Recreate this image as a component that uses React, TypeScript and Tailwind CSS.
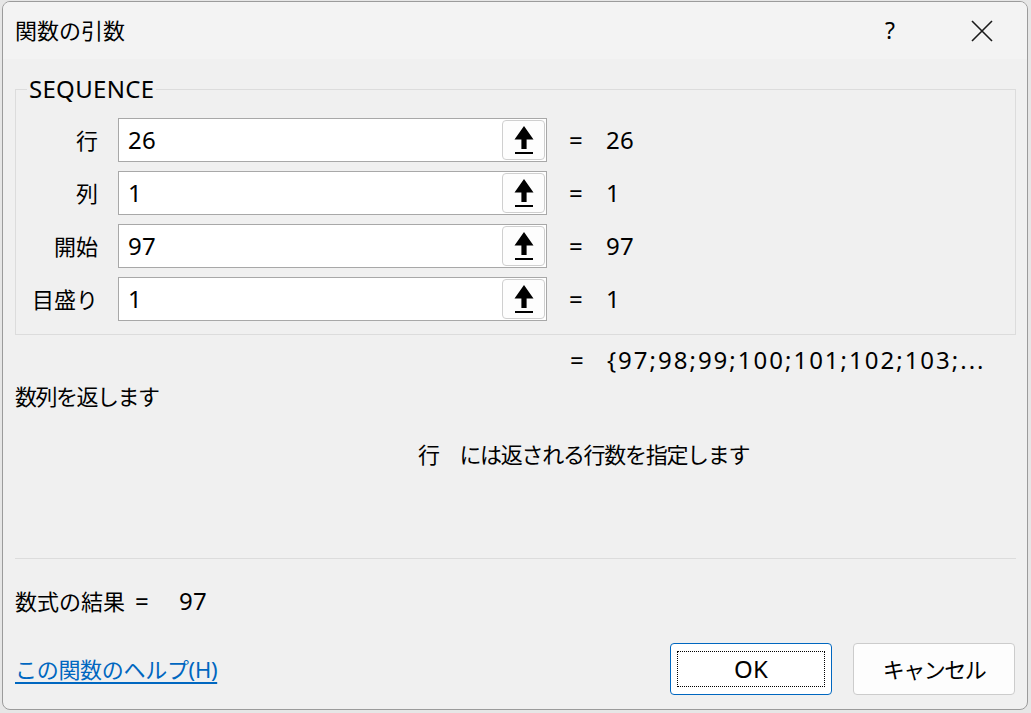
import React from 'react'

const rows = [
  { label: '行', value: '26' },
  { label: '列', value: '1' },
  { label: '開始', value: '97' },
  { label: '目盛り', value: '1' },
]

const font = "font-['Noto_Sans','Noto_Sans_CJK_JP',sans-serif]"
// Latin text in the reference is a bit wider than Noto Sans at 22px
const latin = 'text-[24px] tracking-[0.3px]'

const RefButton = () => (
  <div className="my-[1px] mr-[1px] flex w-[43px] items-center justify-center rounded-[4px] border border-[#cfcfcf] bg-[#fdfdfd]">
    <svg width="20" height="30" viewBox="0 0 20 30" aria-hidden="true">
      <path d="M10 1 L19.5 14.5 H12.6 V24 H7.4 V14.5 H0.5 Z" fill="#000" />
      <rect x="1" y="27" width="18" height="2" fill="#000" />
    </svg>
  </div>
)

const ArgRow = ({ label, value }: { label: string; value: string }) => (
  <div className="flex h-[44px] items-center">
    <div className="w-[84px] pr-[2px] text-right">{label}</div>
    <div className="ml-[18px] flex h-[44px] w-[429px] border border-[#a8a8a8] bg-white">
      <div className={`flex flex-1 items-center pl-[9px] ${latin}`}>{value}</div>
      <RefButton />
    </div>
    <div className={`ml-[22px] w-[37px] ${latin}`}>=</div>
    <div className={latin}>{value}</div>
  </div>
)

export default function App() {
  return (
    <div className={`h-[713px] w-[1031px] overflow-hidden bg-[#e6e6e6] pl-[2px] pt-[1px] text-[22px] text-[#000] ${font}`}>
      <div className="flex h-[709px] w-[1026px] flex-col overflow-hidden rounded-[8px] border border-[#9b9b9b] bg-[#f0f0f0]">
        {/* title bar */}
        <div className="flex h-[57px] shrink-0 items-center bg-[#f3f3f3] pl-[12px]">
          <div className="flex-1 text-[22px]">関数の引数</div>
          <div className="w-[30px] text-center text-[23px]">?</div>
          <div className="ml-[65px] mr-[33px] flex w-[24px] justify-center">
            <svg width="22" height="22" viewBox="0 0 22 22" aria-hidden="true">
              <path d="M1 1 L21 21 M21 1 L1 21" stroke="#1a1a1a" strokeWidth="1.6" />
            </svg>
          </div>
        </div>

        <div className="flex flex-1 flex-col px-[12px]">
          {/* group box */}
          <div className="relative mt-[30px] h-[246px] w-[1001px] border border-[#dcdcdc]">
            <span className={`absolute -top-[16px] left-[11px] bg-[#f0f0f0] px-[2px] leading-[30px] ${latin}`}>SEQUENCE</span>
            <div className="mt-[28px] flex flex-col gap-[9px]">
              {rows.map((r) => (
                <ArgRow key={r.label} label={r.label} value={r.value} />
              ))}
            </div>
          </div>

          <div className="mt-[10px] flex h-[30px] items-center pl-[555px]">
            <div className={`w-[37px] ${latin}`}>=</div>
            <div className="text-[24px] tracking-[2px]">{'{97;98;99;100;101;102;103;...'}</div>
          </div>

          <div className="mt-[6px] h-[30px] leading-[30px] tracking-[-1.5px]">数列を返します</div>

          <div className="mt-[28px] h-[30px] pl-[403px] leading-[30px] tracking-[-1.3px]">行　には返される行数を指定します</div>

          <div className="mt-[89px] h-px w-[1001px] bg-[#dcdcdc]" />

          <div className="mt-[27px] flex h-[30px] items-center">
            <span>数式の結果</span>
            <span className={`ml-[10px] ${latin}`}>=</span>
            <span className={`ml-[30px] ${latin}`}>97</span>
          </div>

          <div className="mt-[27px] flex items-center justify-between">
            <a href="#" className="leading-[30px] tracking-[-0.3px] text-[#0067c0] underline decoration-[2px] underline-offset-[4px]">
              この関数のヘルプ(H)
            </a>
            <div className="flex gap-[21px]">
              <button className="relative flex h-[52px] w-[162px] items-center justify-center rounded-[4px] border border-[#0067c0] bg-white">
                <span className="absolute inset-x-[6px] inset-y-[7px] border border-dotted border-black" />
                <span className={latin}>OK</span>
              </button>
              <button className="flex h-[52px] w-[162px] items-center justify-center rounded-[4px] border border-[#cccccc] bg-[#fdfdfd] tracking-[-1.5px]">
                キャンセル
              </button>
            </div>
          </div>
        </div>
      </div>
    </div>
  )
}
